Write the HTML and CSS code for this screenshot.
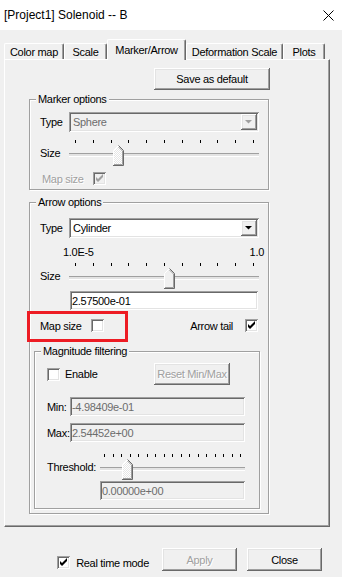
FILE: index.html
```html
<!DOCTYPE html>
<html lang="en">
<head>
  <meta charset="UTF-8">
  <title>[Project1] Solenoid -- B</title>
  <link rel="stylesheet" href="styles.css">
</head>

<body>

  <div class="titlebar">
    <span class="title">[Project1] Solenoid -- B</span>
    <svg class="close-x" width="11" height="11" viewBox="0 0 11 11">
      <path d="M0.5 0.5 L10.5 10.5 M10.5 0.5 L0.5 10.5" stroke="#000" stroke-width="1" fill="none"/>
    </svg>
  </div>

  <div class="dialog">
    <div class="tabs">
      <div class="tab tab-color">Color map</div>
      <div class="tab tab-scale">Scale</div>
      <div class="tab tab-marker active">Marker/Arrow</div>
      <div class="tab tab-deform">Deformation Scale</div>
      <div class="tab tab-plots">Plots</div>
    </div>

    <div class="panel">
      <div class="column">
        <button class="btn save-btn">Save as default</button>

        <!-- Marker options -->
        <fieldset class="group marker-group">
          <legend>Marker options</legend>

          <div class="row type-row">
            <span class="type-label">Type</span>
            <div class="combo disabled">
              <span class="combo-text">Sphere</span>
              <span class="combo-arrow">
                <svg width="16" height="16" viewBox="0 0 16 16"><path d="M4 6 H11 L7.5 9.5 Z" fill="#a0a0a0"/></svg>
              </span>
            </div>
          </div>

          <div class="row slider-row">
            <span>Size</span>
            <div class="slider">
              <div class="ticks">
                <span></span><span></span><span></span><span></span><span></span><span></span>
                <span></span><span></span><span></span><span></span><span></span>
              </div>
              <div class="slider-body">
                <div class="groove"></div>
                <svg class="thumb" style="left: 44px" width="11" height="21" viewBox="0 0 11 21">
                  <defs>
                    <pattern id="checker" width="2" height="2" patternUnits="userSpaceOnUse">
                      <rect width="2" height="2" fill="#e6e6e6"/>
                      <rect width="1" height="1" fill="#fff"/>
                      <rect x="1" y="1" width="1" height="1" fill="#fff"/>
                    </pattern>
                  </defs>
                  <path d="M0.5 20.5 V5.5 L5.5 0.5 L10.5 5.5 V20.5 Z" fill="url(#checker)"/>
                  <path d="M0.5 20 V5.5 L5.5 0.5" stroke="#fff" fill="none"/>
                  <path d="M5.5 0.5 L10.5 5.5 V20.5 H0" stroke="#696969" fill="none"/>
                  <path d="M5.5 2 L9.5 6 V19.5 H1" stroke="#a0a0a0" fill="none"/>
                </svg>
              </div>
            </div>
          </div>

          <div class="row check-row marker-map">
            <span class="check-label disabled-text">Map size</span>
            <span class="check disabled">
              <svg width="13" height="13" viewBox="0 0 13 13"><path d="M3 5 L5 7 L10 2 V5 L5 10 L3 8 Z" fill="#a0a0a0"/></svg>
            </span>
          </div>
        </fieldset>

        <!-- Arrow options -->
        <fieldset class="group arrow-group">
          <legend>Arrow options</legend>

          <div class="row type-row">
            <span class="type-label">Type</span>
            <div class="combo">
              <span class="combo-text">Cylinder</span>
              <span class="combo-arrow">
                <svg width="16" height="16" viewBox="0 0 16 16"><path d="M4 6 H11 L7.5 9.5 Z" fill="#000"/></svg>
              </span>
            </div>
          </div>

          <div class="range-labels">
            <span>1.0E-5</span>
            <span>1.0</span>
          </div>

          <div class="row slider-row arrow-slider">
            <span>Size</span>
            <div class="slider">
              <div class="ticks">
                <span></span><span></span><span></span><span></span><span></span><span></span>
                <span></span><span></span><span></span><span></span><span></span>
              </div>
              <div class="slider-body">
                <div class="groove"></div>
                <svg class="thumb" style="left: 95px" width="11" height="21" viewBox="0 0 11 21">
                  <path d="M0.5 20.5 V5.5 L5.5 0.5 L10.5 5.5 V20.5 Z" fill="#f0f0f0"/>
                  <path d="M0.5 20 V5.5 L5.5 0.5" stroke="#fff" fill="none"/>
                  <path d="M5.5 0.5 L10.5 5.5 V20.5 H0" stroke="#696969" fill="none"/>
                  <path d="M5.5 2 L9.5 6 V19.5 H1" stroke="#a0a0a0" fill="none"/>
                </svg>
              </div>
            </div>
          </div>

          <input class="edit size-edit" type="text" value="2.57500e-01">

          <div class="row check-row arrow-checks">
            <span class="check-label">Map size</span>
            <span class="check"></span>
            <span class="tail-label">Arrow tail</span>
            <span class="check tail-check">
              <svg width="13" height="13" viewBox="0 0 13 13"><path d="M3 5 L5 7 L10 2 V5 L5 10 L3 8 Z" fill="#000"/></svg>
            </span>
            <div class="highlight"></div>
          </div>

          <!-- Magnitude filtering -->
          <fieldset class="group magnitude-group">
            <legend>Magnitude filtering</legend>

            <div class="row enable-row">
              <span class="check"></span>
              <span class="enable-label">Enable</span>
              <button class="btn reset-btn" disabled>Reset Min/Max</button>
            </div>

            <div class="row field-row min-row">
              <span class="field-label">Min:</span>
              <input class="edit disabled" type="text" value="-4.98409e-01" disabled>
            </div>

            <div class="row field-row max-row">
              <span class="field-label">Max:</span>
              <input class="edit disabled" type="text" value="2.54452e+00" disabled>
            </div>

            <div class="row slider-row threshold-row">
              <span>Threshold:</span>
              <div class="slider threshold-slider">
                <div class="ticks">
                  <span></span><span></span><span></span><span></span><span></span><span></span>
                  <span></span><span></span><span></span><span></span><span></span><span></span>
                  <span></span><span></span><span></span><span></span><span></span>
                </div>
                <div class="slider-body">
                  <div class="groove"></div>
                  <svg class="thumb" style="left: 22px" width="11" height="21" viewBox="0 0 11 21">
                    <path d="M0.5 20.5 V5.5 L5.5 0.5 L10.5 5.5 V20.5 Z" fill="url(#checker)"/>
                    <path d="M0.5 20 V5.5 L5.5 0.5" stroke="#fff" fill="none"/>
                    <path d="M5.5 0.5 L10.5 5.5 V20.5 H0" stroke="#696969" fill="none"/>
                    <path d="M5.5 2 L9.5 6 V19.5 H1" stroke="#a0a0a0" fill="none"/>
                  </svg>
                </div>
              </div>
            </div>

            <input class="edit disabled threshold-edit" type="text" value="0.00000e+00" disabled>
          </fieldset>
        </fieldset>
      </div>
    </div>

    <div class="footer">
      <div class="realtime">
        <span class="check">
          <svg width="13" height="13" viewBox="0 0 13 13"><path d="M3 5 L5 7 L10 2 V5 L5 10 L3 8 Z" fill="#000"/></svg>
        </span>
        <span class="realtime-label">Real time mode</span>
      </div>
      <button class="btn apply-btn" disabled>Apply</button>
      <button class="btn close-btn">Close</button>
    </div>
  </div>

</body>
</html>
```

FILE: styles.css
```css
body {
  margin: 0;
  width: 342px;
  height: 577px;
  background-color: #f0f0f0;
  font-family: "Liberation Sans", Arial, sans-serif;
  font-size: 11px;
  letter-spacing: -0.3px;
  color: #000;
  overflow: hidden;
}

/* Title bar */
.titlebar {
  height: 30px;
  background-color: #fff;
  display: flex;
  align-items: center;
  justify-content: space-between;
  padding: 0 8px 0 4px;
}

.title {
  font-size: 12px;
  letter-spacing: 0;
}

.close-x {
  display: block;
}

.dialog {
  padding: 9px 0 0 4px;
}

/* Tabs */
.tabs {
  display: flex;
  align-items: flex-end;
  height: 20px;
}

.tab {
  height: 16px;
  box-sizing: border-box;
  display: flex;
  align-items: center;
  justify-content: center;
  white-space: nowrap;
  border-top: 1px solid #fff;
  border-left: 1px solid #fff;
  border-right: 1px solid #696969;
  border-radius: 2px 2px 0 0;
  box-shadow: inset -1px 0 #a0a0a0;
}

.tab.active {
  height: 21px;
  margin-bottom: -1px;
  padding-bottom: 1px;
  position: relative;
  z-index: 1;
  background-color: #f0f0f0;
}

.tab-color { width: 60px; }
.tab-scale { width: 43px; }
.tab-marker { width: 79px; }
.tab-deform { width: 97px; }
.tab-plots { width: 42px; }

.panel {
  width: 326px;
  height: 468px;
  box-sizing: border-box;
  border: 1px solid;
  border-color: #fff #696969 #696969 #fff;
  box-shadow: inset -1px -1px #a0a0a0;
  padding: 8px 0 0 24px;
}

.column {
  width: 241px;
  display: flex;
  flex-direction: column;
}

/* Buttons */
.btn {
  font: inherit;
  letter-spacing: inherit;
  color: #000;
  background-color: #f0f0f0;
  border: none;
  padding: 0;
  white-space: nowrap;
  overflow: hidden;
  box-shadow: inset -1px -1px #696969, inset 1px 1px #fff,
              inset -2px -2px #a0a0a0, inset 2px 2px #e3e3e3;
}

.btn:disabled {
  color: #a0a0a0;
  text-shadow: 1px 1px #fff;
}

.save-btn {
  align-self: flex-end;
  width: 116px;
  height: 22px;
}

/* Group boxes */
.group {
  margin: 0;
  min-width: 0;
  box-sizing: border-box;
  border: 1px solid #a0a0a0;
  box-shadow: 1px 1px #fff, inset 1px 1px #fff;
}

.group legend {
  padding: 0 2px;
  line-height: 13px;
  background-color: #f0f0f0;
}

.marker-group {
  width: 240px;
  margin-top: 3px;
  padding: 6px 9px 4px 10px;
}

.arrow-group {
  width: 240px;
  margin-top: 6px;
  padding: 9px 9px 4px 10px;
}

.marker-group > legend,
.arrow-group > legend {
  margin-left: -4px;
}

.magnitude-group {
  width: 226px;
  margin-top: 13px;
  margin-left: -6px;
  padding: 5px 14px 8px 12px;
}

.magnitude-group > legend {
  margin-left: -6px;
}

.row {
  display: flex;
  align-items: center;
  position: relative;
}

.type-row {
  height: 20px;
}

.type-label {
  width: 29px;
  flex-shrink: 0;
}

/* Combo boxes */
.combo {
  flex: 1;
  height: 20px;
  box-sizing: border-box;
  padding: 2px;
  display: flex;
  align-items: center;
  background-color: #fff;
  box-shadow: inset 1px 1px #a0a0a0, inset -1px -1px #fff,
              inset 2px 2px #696969, inset -2px -2px #e3e3e3;
}

.combo.disabled {
  background-color: #f0f0f0;
  color: #6d6d6d;
}

.combo-text {
  flex: 1;
  padding-left: 2px;
}

.combo-arrow {
  width: 16px;
  height: 16px;
  background-color: #f0f0f0;
  box-shadow: inset -1px -1px #696969, inset 1px 1px #fff,
              inset -2px -2px #a0a0a0, inset 2px 2px #e3e3e3;
}

.combo-arrow svg {
  display: block;
}

/* Sliders */
.slider-row {
  margin-top: 8px;
}

.slider {
  width: 190px;
  margin-left: auto;
}

.ticks {
  height: 3px;
  margin-bottom: 2px;
  padding: 0 5px 0 6px;
  display: flex;
  justify-content: space-between;
}

.ticks span {
  width: 1px;
  background-color: #000;
}

.slider-body {
  height: 21px;
  box-sizing: border-box;
  padding-top: 8px;
  position: relative;
}

.groove {
  height: 4px;
  box-sizing: border-box;
  border-top: 1px solid #a0a0a0;
  border-bottom: 1px solid #fff;
  background-color: #e3e3e3;
}

.thumb {
  position: absolute;
  top: 0;
  display: block;
}

/* Check boxes */
.check-row {
  height: 13px;
  margin-top: 6px;
}

.check {
  width: 13px;
  height: 13px;
  flex-shrink: 0;
  background-color: #fff;
  box-shadow: inset 1px 1px #a0a0a0, inset -1px -1px #fff,
              inset 2px 2px #696969, inset -2px -2px #e3e3e3;
}

.check.disabled {
  background-color: #f0f0f0;
}

.check svg {
  display: block;
}

.check-label {
  width: 51px;
  flex-shrink: 0;
}

.disabled-text {
  color: #a0a0a0;
  text-shadow: 1px 1px #fff;
}

.marker-map {
  padding-left: 2px;
}

/* Edits */
.edit {
  font: inherit;
  letter-spacing: inherit;
  color: #000;
  height: 19px;
  box-sizing: border-box;
  border: none;
  outline: none;
  padding: 0 2px;
  background-color: #fff;
  box-shadow: inset 1px 1px #a0a0a0, inset -1px -1px #fff,
              inset 2px 2px #696969, inset -2px -2px #e3e3e3;
}

.edit.disabled {
  background-color: #f0f0f0;
  color: #6d6d6d;
}

/* Arrow options */
.range-labels {
  display: flex;
  justify-content: space-between;
  line-height: 13px;
  margin: 8px -5px 0 23px;
}

.arrow-slider {
  margin-top: 4px;
}

.size-edit {
  width: 188px;
  margin: 2px 0 0 30px;
}

.arrow-checks {
  margin-top: 9px;
}

.tail-label {
  margin-left: auto;
  margin-right: 12px;
}

.tail-check {
  margin-right: 1px;
}

.highlight {
  position: absolute;
  top: -8px;
  left: -13px;
  width: 101px;
  height: 31px;
  box-sizing: border-box;
  border: 3px solid #ed1c24;
}

/* Magnitude filtering */
.enable-row {
  height: 22px;
}

.enable-label {
  margin-left: 5px;
}

.reset-btn {
  width: 76px;
  height: 22px;
  margin: 0 15px 0 auto;
  text-align: center;
}

.field-label {
  width: 23px;
  flex-shrink: 0;
}

.field-row .edit {
  flex: 1;
  min-width: 0;
}

.min-row {
  margin-top: 12px;
}

.max-row {
  margin-top: 7px;
}

.threshold-row {
  margin-top: 12px;
}

.threshold-slider {
  width: 145px;
}

.threshold-slider .ticks {
  padding: 0 4px;
}

.threshold-edit {
  width: 145px;
  margin: 1px 0 0 53px;
}

/* Footer */
.footer {
  display: flex;
  align-items: flex-end;
  justify-content: flex-end;
  padding-right: 20px;
  margin-top: 21px;
}

.realtime {
  display: flex;
  align-items: center;
  margin: 0 13px 2px 0;
}

.realtime-label {
  margin-left: 6px;
}

.apply-btn,
.close-btn {
  width: 75px;
  height: 23px;
}

.apply-btn {
  margin-right: 10px;
}
```
